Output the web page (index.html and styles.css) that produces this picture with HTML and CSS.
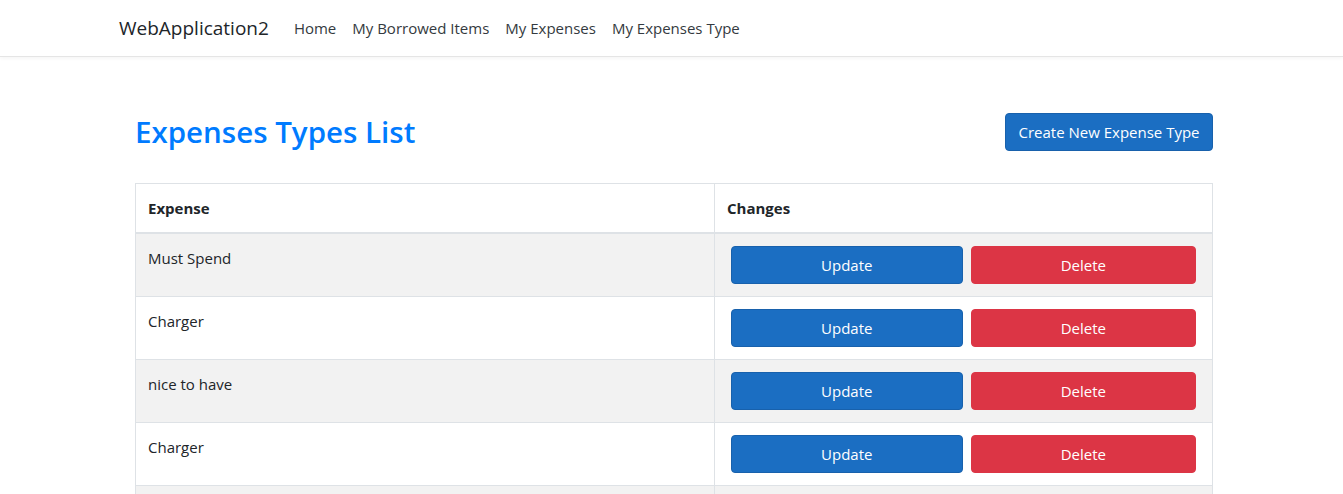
FILE: index.html
```html
<!DOCTYPE html>
<html lang="en">
<head>
<meta charset="utf-8">
<title>Expenses Types List</title>
<link rel="stylesheet" href="styles.css">
</head>
<body>
<header class="navbar">
  <div class="nav-inner">
    <a class="brand" href="#">WebApplication2</a>
    <nav class="nav-links">
      <a href="#">Home</a>
      <a href="#">My Borrowed Items</a>
      <a href="#">My Expenses</a>
      <a href="#">My Expenses Type</a>
    </nav>
  </div>
</header>
<main class="main">
  <div class="title-row">
    <h2 class="title">Expenses Types List</h2>
    <a class="btn btn-primary btn-create" href="#">Create New Expense Type</a>
  </div>
  <table class="table">
    <thead>
      <tr><th class="col-expense">Expense</th><th>Changes</th></tr>
    </thead>
    <tbody>
      <tr class="odd"><td>Must Spend</td><td class="actions"><div class="btns"><a class="btn btn-primary" href="#">Update</a><a class="btn btn-danger" href="#">Delete</a></div></td></tr>
      <tr><td>Charger</td><td class="actions"><div class="btns"><a class="btn btn-primary" href="#">Update</a><a class="btn btn-danger" href="#">Delete</a></div></td></tr>
      <tr class="odd"><td>nice to have</td><td class="actions"><div class="btns"><a class="btn btn-primary" href="#">Update</a><a class="btn btn-danger" href="#">Delete</a></div></td></tr>
      <tr><td>Charger</td><td class="actions"><div class="btns"><a class="btn btn-primary" href="#">Update</a><a class="btn btn-danger" href="#">Delete</a></div></td></tr>
      <tr class="odd"><td class="empty"></td><td class="empty"></td></tr>
    </tbody>
  </table>
</main>
</body>
</html>
```

FILE: styles.css
```css
* { box-sizing: border-box; }
html, body { margin: 0; }
body {
  font-family: "Open Sans", "Noto Sans", "DejaVu Sans", sans-serif;
  font-size: 15px;
  line-height: 24px;
  color: #212529;
  background: #fff;
}
a { text-decoration: none; }

.navbar {
  height: 57px;
  background: #fff;
  border-bottom: 1px solid #e5e5e5;
  box-shadow: 0 1px 4px rgba(0, 0, 0, 0.05);
}
.nav-inner {
  height: 56px;
  padding-left: 119px;
  display: flex;
  align-items: center;
}
.brand {
  font-size: 19px;
  color: #212529;
  margin-right: 17px;
}
.nav-links { display: flex; }
.nav-links a {
  color: #343a40;
  padding: 0 8px;
  font-size: 15px;
}

.main {
  width: 1078px;
  margin-left: 135px;
  padding-top: 56px;
}
.title-row {
  display: flex;
  justify-content: space-between;
  align-items: center;
  height: 38px;
  margin-bottom: 32px;
}
.title {
  margin: 0;
  font-size: 29.5px;
  font-weight: 600;
  color: #007bff;
  line-height: 40px;
}
.btn {
  display: inline-flex;
  align-items: center;
  justify-content: center;
  height: 38px;
  padding: 0 12px;
  border-radius: 4px;
  color: #fff;
  font-size: 15px;
  border: 1px solid transparent;
}
.btn-primary { background: #1b6ec2; border-color: #1861ac; }
.btn-danger { background: #dc3545; border-color: #dc3545; }
.btn-create { width: 208px; padding: 0; }

.table {
  width: 100%;
  border-collapse: collapse;
  border: 1px solid #dee2e6;
}
.table th, .table td {
  border: 1px solid #dee2e6;
  padding: 12px;
  text-align: left;
  vertical-align: top;
}
.table th { font-weight: 700; }
.table thead th { border-bottom: 2px solid #dee2e6; }
.col-expense { width: 579px; }
.table tr.odd td { background: #f2f2f2; }
.table td.actions { padding: 12px 16px; }
.table td.empty { height: 62px; }
.btns { display: flex; gap: 8px; }
.btns .btn { flex: 1 1 auto; }
```
